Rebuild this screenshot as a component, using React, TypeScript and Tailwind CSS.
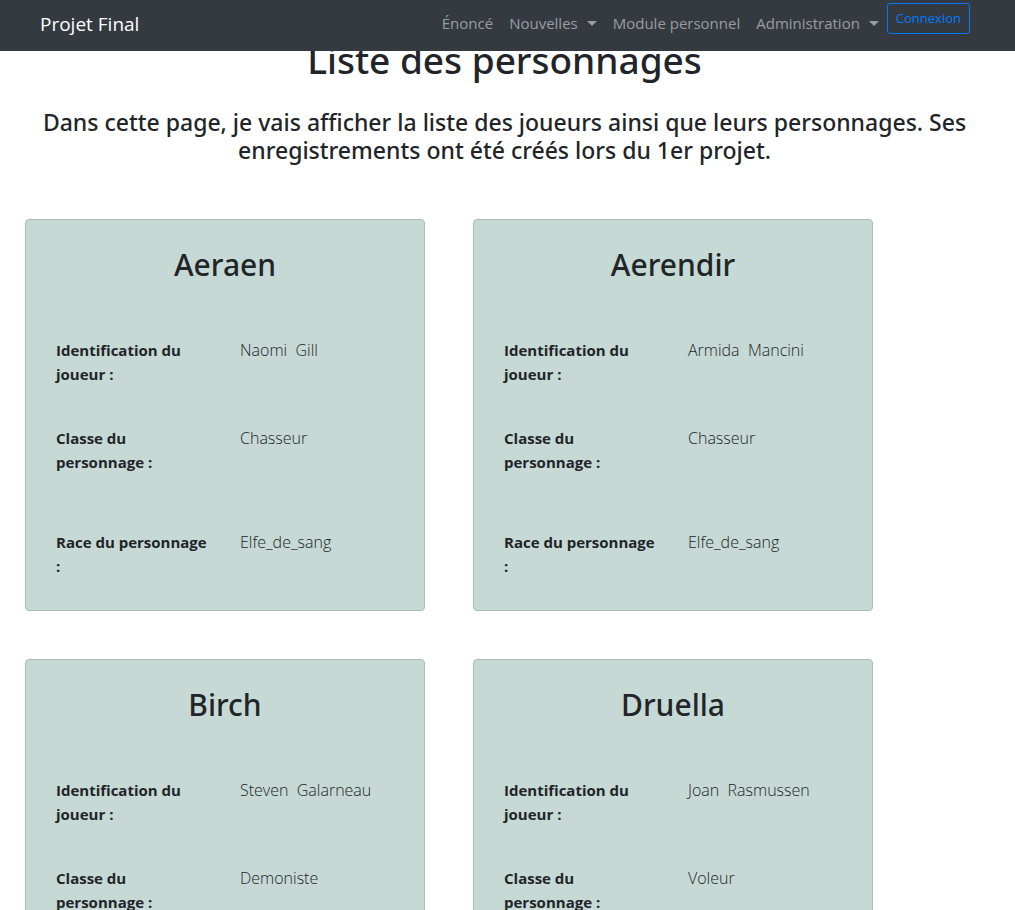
import React from "react";

type Personnage = { nom: string; joueur: string; classe: string; race: string };

const personnages: Personnage[] = [
  { nom: "Aeraen", joueur: "Naomi  Gill", classe: "Chasseur", race: "Elfe_de_sang" },
  { nom: "Aerendir", joueur: "Armida  Mancini", classe: "Chasseur", race: "Elfe_de_sang" },
  { nom: "Birch", joueur: "Steven  Galarneau", classe: "Demoniste", race: "Elfe_de_sang" },
  { nom: "Druella", joueur: "Joan  Rasmussen", classe: "Voleur", race: "Elfe_de_sang" },
];

function Caret() {
  return (
    <svg className="ml-[9px] h-[5px] w-[10px]" viewBox="0 0 10 5" fill="currentColor" aria-hidden="true">
      <path d="M0 0h10L5 5z" />
    </svg>
  );
}

function Ligne({ label, valeur, className }: { label: string; valeur: string; className?: string }) {
  return (
    <div className={`grid grid-cols-2 ${className ?? ""}`}>
      <dt className="pr-[30px] text-[15px] leading-6 font-bold">{label}</dt>
      <dd className="text-base leading-6 font-light whitespace-pre">{valeur}</dd>
    </div>
  );
}

function Carte({ p }: { p: Personnage }) {
  return (
    <article className="w-[400px] rounded border border-[#abbcb8] bg-[#c6d9d5] pt-[26px] pb-8 pl-[30px]">
      <h2 className="pr-[30px] text-center font-['Noto_Sans','Open_Sans',sans-serif] text-[30px] leading-[38px] font-medium">{p.nom}</h2>
      <dl className="mt-[54px]">
        <Ligne label="Identification du joueur :" valeur={p.joueur} />
        <Ligne label="Classe du personnage :" valeur={p.classe} className="mt-10" />
        <Ligne label="Race du personnage :" valeur={p.race} className="mt-14" />
      </dl>
    </article>
  );
}

export default function App() {
  return (
    <div className="min-h-screen bg-white font-['Open_Sans','Noto_Sans',sans-serif] text-[#212529]">
      <header className="fixed inset-x-0 top-0 z-10 flex h-[51px] items-start justify-between bg-[#343a40] pr-[45px] pl-10">
        <a href="#" className="pt-[9px] text-[19px] leading-[30px] text-white">Projet Final</a>
        <nav className="flex items-start text-[15px] text-[#9a9da0]">
          <a href="#" className="px-2 pt-[11px] leading-6">Énoncé</a>
          <button type="button" className="flex items-center px-2 pt-[11px] leading-6">Nouvelles<Caret /></button>
          <a href="#" className="px-2 pt-[11px] leading-6">Module personnel</a>
          <button type="button" className="flex items-center px-2 pt-[11px] leading-6">Administration<Caret /></button>
          <button type="button" className="mt-[3px] rounded-[3px] border border-[#007bff] px-2 py-1 text-[13px] leading-[21px] text-[#007bff]">Connexion</button>
        </nav>
      </header>
      <main className="px-[25px] pt-9">
        <div className="pr-[6px] text-center font-['Noto_Sans','Open_Sans',sans-serif]">
          <h1 className="text-[37px] leading-[48px] font-medium">Liste des personnages</h1>
          <p className="mt-6 text-[23px] leading-7 font-medium">
            Dans cette page, je vais afficher la liste des joueurs ainsi que leurs personnages. Ses enregistrements ont été créés lors du 1er projet.
          </p>
        </div>
        <section className="mt-[55px] flex flex-wrap gap-12">
          {personnages.map((p) => (
            <Carte key={p.nom} p={p} />
          ))}
        </section>
      </main>
    </div>
  );
}
